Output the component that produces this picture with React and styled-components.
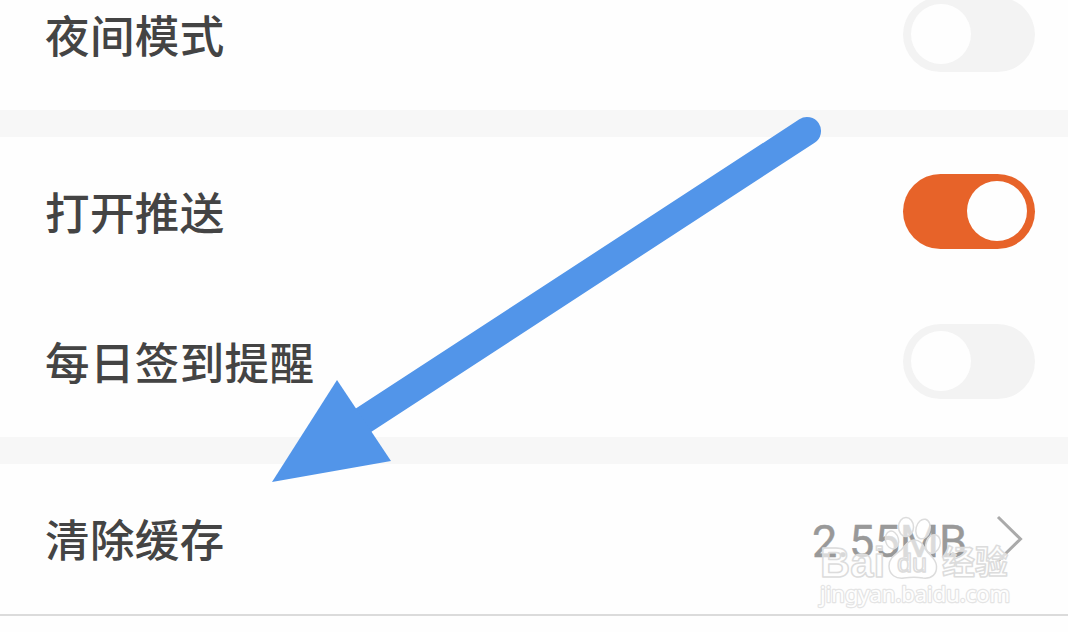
import React from 'react'
import { createGlobalStyle, styled } from 'styled-components'

const App = () => {
  return (
    <Screen>
      <Group $first>
        <Row>
          <Label>夜间模式</Label>
          <Toggle />
        </Row>
      </Group>
      <Group>
        <Row>
          <Label>打开推送</Label>
          <Toggle $on />
        </Row>
        <Row>
          <Label>每日签到提醒</Label>
          <Toggle />
        </Row>
      </Group>
      <Group $last>
        <Row>
          <Label>清除缓存</Label>
          <Detail>
            <Value>2.55MB</Value>
            <Chevron viewBox="0 0 28 50">
              <path d="M2 3 L24.5 25 L2 47" />
            </Chevron>
          </Detail>
        </Row>
      </Group>
      <Watermark />
      <Arrow viewBox="0 0 1068 632">
        <line x1="807" y1="131" x2="350" y2="429" />
        <polygon points="272,482 337,380 391,461" />
      </Arrow>
      <GlobalStyle />
    </Screen>
  )
}

const Toggle = ({ $on }) => (
  <Track $on={$on} role="switch" aria-checked={!!$on}>
    <Knob />
  </Track>
)

const Watermark = () => (
  <Mark viewBox="0 0 204 100">
    <g className="paw">
      <ellipse cx="82" cy="30" rx="6.5" ry="9" transform="rotate(-14 82 30)" />
      <ellipse cx="96" cy="17" rx="7.5" ry="9.5" />
      <ellipse cx="113" cy="19" rx="7" ry="10" transform="rotate(14 113 19)" />
      <ellipse cx="123" cy="34" rx="7" ry="9.5" transform="rotate(20 123 34)" />
      <path d="M104 30 C98 30 95 36 91 40 C85 45 79 48 79 56 C79 65 86 69 94 68 C101 67 107 67 113 68 C122 69 127 64 126.5 56 C126 48 119 45 116 40 C113 35 111 30 104 30 Z" />
    </g>
    <g className="name">
      <text x="10" y="67" fontSize="42" textLength="65" lengthAdjust="spacingAndGlyphs">Bai</text>
      <text className="du" x="87" y="62" fontSize="26" textLength="30" lengthAdjust="spacingAndGlyphs">du</text>
      <text x="132" y="64" fontSize="33" textLength="66" lengthAdjust="spacingAndGlyphs">经验</text>
    </g>
    <text className="url" x="10" y="92" fontSize="22" textLength="190" lengthAdjust="spacingAndGlyphs">jingyan.baidu.com</text>
  </Mark>
)

const GlobalStyle = createGlobalStyle`
  body {
    margin: 0;
    background: #fefefe;
    overflow: hidden;
  }
`
const Screen = styled.div`
  position: relative;
  height: 632px;
  overflow: hidden;
  background: #fefefe;
  font-family: Roboto, "Noto Sans CJK SC", sans-serif;
`
const Group = styled.div`
  margin-top: ${(props) => (props.$first ? '-40px' : '0')};
  border-bottom: ${(props) => (props.$last ? '2px solid #dbdbdb' : '27px solid #f7f7f7')};
`
const Row = styled.div`
  box-sizing: border-box;
  height: 150px;
  padding: 0 33px 1px 45px;
  display: flex;
  align-items: center;
  justify-content: space-between;
`
const Label = styled.span`
  font-family: "Noto Sans CJK SC", sans-serif;
  font-size: 44.5px;
  font-weight: 500;
  line-height: 66px;
  letter-spacing: 0.4px;
  padding-bottom: 2px;
  color: #444;
`
const Track = styled.div`
  box-sizing: border-box;
  width: 132px;
  height: 75px;
  padding: 0 8px;
  border-radius: 38px;
  display: flex;
  align-items: center;
  justify-content: ${(props) => (props.$on ? 'flex-end' : 'flex-start')};
  background: ${(props) => (props.$on ? '#e76329' : '#f3f3f3')};
`
const Knob = styled.div`
  width: 60px;
  height: 60px;
  margin-bottom: 1px;
  border-radius: 50%;
  background: #fefefe;
`
const Detail = styled.div`
  display: flex;
  align-items: center;
  gap: 29px;
  padding-right: 11px;
`
const Value = styled.span`
  font-size: 45px;
  line-height: 53px;
  padding-top: 5px;
  color: #999;
  -webkit-text-stroke: 0.4px #999;
`
const Chevron = styled.svg`
  width: 28px;
  height: 50px;
  fill: none;
  stroke: #aaa;
  stroke-width: 3px;
`
const Mark = styled.svg`
  position: absolute;
  left: 810px;
  top: 510px;
  width: 204px;
  height: 100px;
  overflow: visible;
  fill: rgba(255, 255, 255, 0.65);
  stroke: #dcdcdc;
  stroke-width: 1.5px;
  stroke-linejoin: round;

  .name {
    font-family: "Liberation Sans", "Noto Sans CJK SC", sans-serif;
    font-weight: bold;
  }

  .du {
    font-weight: normal;
  }

  .url {
    font-family: "Noto Sans", sans-serif;
    font-weight: 400;
    stroke: #e4e4e4;
    stroke-width: 2.4px;
    fill: #fefefe;
    paint-order: stroke;
  }
`
const Arrow = styled.svg`
  position: absolute;
  inset: 0;
  width: 1068px;
  height: 632px;
  fill: #5295e9;

  line {
    stroke: #5295e9;
    stroke-width: 28px;
    stroke-linecap: round;
  }
`

export default App
